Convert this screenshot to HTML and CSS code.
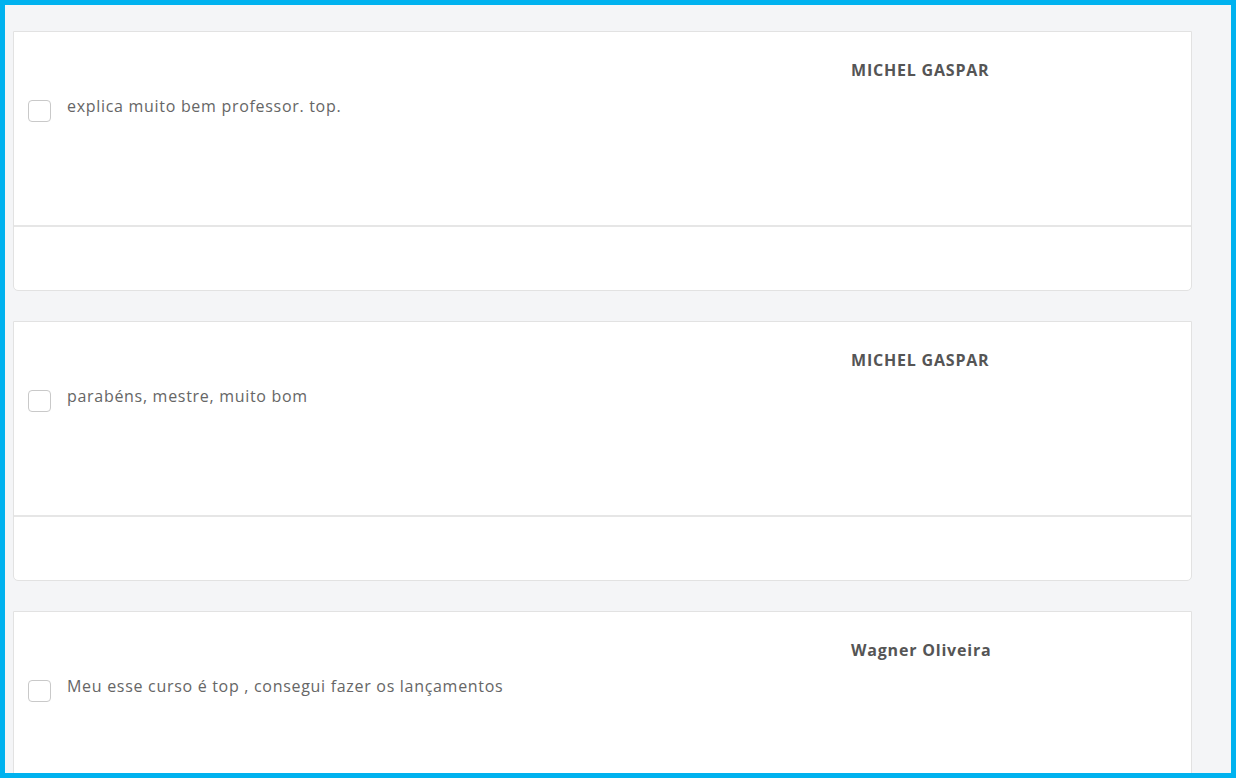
FILE: index.html
```html
<!DOCTYPE html>
<html>
<head>
    <meta charset="UTF-8">
    <meta name="viewport" content="width=device-width, initial-scale=1.0">
    <title>Comentários</title>
    <link rel="stylesheet" href="styles.css">
</head>
<body>
    <div class="frame">
        <div class="comment">
            <div class="comment-head">
                <label class="comment-text">
                    <span class="check"></span>
                    <span>explica muito bem professor. top.</span>
                </label>
                <div class="comment-author">MICHEL GASPAR</div>
            </div>
            <div class="comment-foot"></div>
        </div>
        <div class="comment">
            <div class="comment-head">
                <label class="comment-text">
                    <span class="check"></span>
                    <span>parabéns, mestre, muito bom</span>
                </label>
                <div class="comment-author">MICHEL GASPAR</div>
            </div>
            <div class="comment-foot"></div>
        </div>
        <div class="comment">
            <div class="comment-head">
                <label class="comment-text">
                    <span class="check"></span>
                    <span>Meu esse curso é top , consegui fazer os lançamentos</span>
                </label>
                <div class="comment-author">Wagner Oliveira</div>
            </div>
            <div class="comment-foot"></div>
        </div>
    </div>
</body>
</html>
```

FILE: styles.css
```css
* {
    box-sizing: border-box;
}

body {
    margin: 0;
    font-family: "Open Sans", Arial, sans-serif;
    background: #fff;
}

.frame {
    width: 1236px;
    height: 778px;
    border: 5px solid #00b2ef;
    background: #f4f5f7;
    padding: 26px 39px 0 8px;
    overflow: hidden;
}

.comment {
    display: flex;
    flex-direction: column;
    height: 260px;
    margin-bottom: 30px;
    background: #fff;
    border: 1px solid #e2e2e2;
    border-radius: 0 0 5px 5px;
}

.comment-head {
    display: flex;
    height: 195px;
    flex-shrink: 0;
    padding-left: 14px;
    border-bottom: 2px solid #e6e6e6;
}

.comment-text {
    display: flex;
    align-items: flex-start;
    gap: 16px;
    width: 823px;
    padding-top: 63px;
    font-size: 16px;
    letter-spacing: 0.7px;
    line-height: 22px;
    color: #666;
}

.check {
    width: 23px;
    height: 22px;
    margin-top: 5px;
    flex-shrink: 0;
    border: 1px solid #c9c9c9;
    border-radius: 4px;
    background: #fff;
}

.comment-author {
    padding-top: 27px;
    font-size: 16px;
    letter-spacing: 0.8px;
    line-height: 22px;
    font-weight: bold;
    color: #555;
}

.comment-foot {
    flex: 1;
}
```
